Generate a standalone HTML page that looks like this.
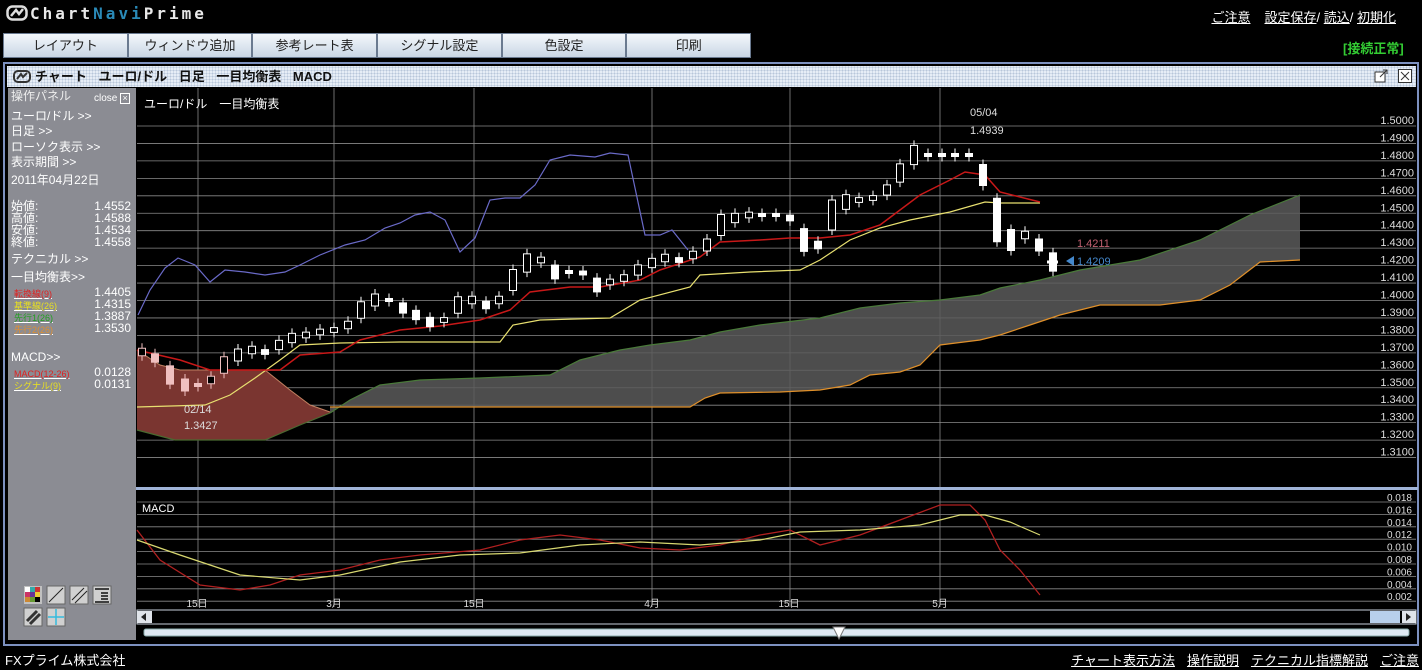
<!DOCTYPE html>
<html><head><meta charset="utf-8">
<style>
*{margin:0;padding:0;box-sizing:border-box}
body{width:1422px;height:670px;background:#000;position:relative;overflow:hidden;font-family:"Liberation Sans","Noto Sans CJK JP",sans-serif;color:#fff}
.abs{position:absolute}
.logo{left:6px;top:4px;font-size:16px;font-weight:bold;letter-spacing:3px;color:#e8e8e8;font-family:"DejaVu Sans Mono","Liberation Mono",monospace}
.toplinks{right:26px;top:7px;font-size:13px}
.toplinks span{text-decoration:underline;margin-left:14px}
.menu{left:3px;top:33px;height:25px;width:748px;display:flex}
.menu div{flex:1;border:1px solid #6a7a90;background:linear-gradient(#f4f8fc,#c9d6e4);color:#222;font-size:13px;text-align:center;line-height:23px}
.ok{left:1343px;top:38px;color:#3c3;font-size:13px;font-weight:bold}
.win{left:3px;top:62px;width:1416px;height:584px;border:2px solid #7d91c0;background:#000}
.title{left:7px;top:66px;width:1409px;height:21px;background:#e6edf6;background-image:radial-gradient(#b8c6da 0.8px,transparent 0.9px);background-size:3px 3px;color:#111;font-size:13px;font-weight:bold;line-height:21px;padding-left:28px;word-spacing:8px}
.panel{left:8px;top:88px;width:128px;height:552px;background:#8b8c93;font-size:12px;line-height:15px}
.panel div{position:absolute;white-space:nowrap}
.r{right:5px}
.foot{top:650px;font-size:13px}
.foot span{text-decoration:underline;margin-left:12px}
</style></head><body>
<div class="abs logo"><svg width="22" height="16" style="vertical-align:-2px;margin-right:2px" viewBox="0 0 22 16"><rect x="1.5" y="1.5" width="19" height="13" rx="5" fill="none" stroke="#ddd" stroke-width="2.5"/><path d="M5 11 L10 5 L13 9 L17 4" stroke="#ddd" stroke-width="2.5" fill="none"/></svg>Chart<span style="color:#2a8ab8">Navi</span>Prime</div>
<div class="abs toplinks"><span>ご注意</span><span>設定保存</span>/ <span style="margin-left:0">読込</span>/ <span style="margin-left:0">初期化</span></div>
<div class="abs menu"><div>レイアウト</div><div>ウィンドウ追加</div><div>参考レート表</div><div>シグナル設定</div><div>色設定</div><div>印刷</div></div>
<div class="abs ok">[接続正常]</div>
<div class="abs win"></div>
<div class="abs title"><svg class="abs" style="left:6px;top:4px" width="18" height="13" viewBox="0 0 18 13"><rect x="1" y="1" width="16" height="11" rx="4" fill="none" stroke="#333" stroke-width="2"/><path d="M4 9 L8 4 L10 7 L14 3" stroke="#333" stroke-width="2" fill="none"/></svg>チャート ユーロ/ドル 日足 一目均衡表 MACD
<svg class="abs" style="left:1366px;top:2px" width="16" height="16"><rect x="2" y="4" width="10" height="10" fill="#fff" stroke="#333"/><path d="M7 9 L14 2 M10 2 H14 V6" stroke="#333" fill="none"/></svg>
<svg class="abs" style="left:1390px;top:2px" width="16" height="16"><rect x="1.5" y="1.5" width="13" height="13" fill="#fff" stroke="#333"/><path d="M4 4 L12 12 M12 4 L4 12" stroke="#333"/></svg></div>
<div class="abs panel">
<div style="left:3px;top:1px;color:#eee">操作パネル</div>
<div style="left:86px;top:3px;font-size:10px">close <span style="border:1px solid #fff;font-size:9px;line-height:9px;display:inline-block;width:10px;text-align:center">×</span></div>
<div style="left:3px;top:21px">ユーロ/ドル &gt;&gt;</div>
<div style="left:3px;top:36px">日足 &gt;&gt;</div>
<div style="left:3px;top:52px">ローソク表示 &gt;&gt;</div>
<div style="left:3px;top:67px">表示期間 &gt;&gt;</div>
<div style="left:3px;top:85px">2011年04月22日</div>
<div style="left:3px;top:112px;line-height:12px">始値:<br>高値:<br>安値:<br>終値:</div>
<div class="r" style="top:112px;line-height:12px;text-align:right">1.4552<br>1.4588<br>1.4534<br>1.4558</div>
<div style="left:3px;top:164px">テクニカル &gt;&gt;</div>
<div style="left:3px;top:182px">一目均衡表&gt;&gt;</div>
<div style="left:6px;top:200px;font-size:9px;line-height:12px;text-decoration:underline"><span style="color:#e02020">転換線(9)</span><br><span style="color:#e8e020">基準線(26)</span><br><span style="color:#20a020">先行1(26)</span><br><span style="color:#e09030">先行2(26)</span></div>
<div class="r" style="top:198px;line-height:12px;text-align:right">1.4405<br>1.4315<br>1.3887<br>1.3530</div>
<div style="left:3px;top:262px">MACD&gt;&gt;</div>
<div style="left:6px;top:280px;font-size:9px;line-height:12px;text-decoration:underline"><span style="color:#e02020">MACD(12-26)</span><br><span style="color:#e8e020">シグナル(9)</span></div>
<div class="r" style="top:278px;line-height:12px;text-align:right">0.0128<br>0.0131</div>
<svg style="position:absolute;left:14px;top:496px" width="100" height="44">
<g><rect x="2" y="2" width="18" height="18" fill="#c0c0c0"/><rect x="3" y="3" width="5" height="5" fill="#fff"/><rect x="8" y="3" width="5" height="5" fill="#3aa"/><rect x="13" y="3" width="5" height="5" fill="#c33"/><rect x="3" y="8" width="5" height="5" fill="#c36"/><rect x="8" y="8" width="5" height="5" fill="#639"/><rect x="13" y="8" width="5" height="5" fill="#ec3"/><rect x="3" y="13" width="5" height="5" fill="#c83"/><rect x="8" y="13" width="5" height="5" fill="#693"/><rect x="13" y="13" width="5" height="5" fill="#000"/></g>
<rect x="25" y="2" width="18" height="18" fill="#d0d0d0" stroke="#666"/><path d="M27 18 L41 4" stroke="#222"/>
<rect x="48" y="2" width="18" height="18" fill="#d0d0d0" stroke="#666"/><path d="M50 16 L62 4 M53 19 L65 7" stroke="#222"/>
<rect x="71" y="2" width="18" height="18" fill="#d0d0d0" stroke="#666"/><path d="M73 5 H87 M79 9 H86 M79 12 H86 M79 15 H86 M73 18 H87" stroke="#111" stroke-width="1.5"/>
<rect x="2" y="24" width="18" height="18" fill="#d0d0d0" stroke="#666"/><path d="M5 37 L15 27 M8 40 L18 30" stroke="#333" stroke-width="3"/>
<rect x="25" y="24" width="18" height="18" fill="#d0d0d0" stroke="#666"/><path d="M34 25 V41 M26 33 H42" stroke="#3bd" stroke-width="1.5"/>
</svg>
</div>
<svg class="abs" style="left:0;top:0" width="1422" height="670" id="ch"></svg>
<div class="abs foot" style="left:5px">FXプライム株式会社</div>
<div class="abs foot" style="right:3px"><span>チャート表示方法</span><span>操作説明</span><span>テクニカル指標解説</span><span>ご注意</span></div>
<script>
var s='';
function pl(p,c,w){return '<polyline fill="none" stroke="'+c+'" stroke-width="'+(w||1)+'" points="'+p+'"/>';}
function pts(a){var o=[];for(var i=0;i<a.length;i+=2)o.push(a[i]+','+a[i+1]);return o.join(' ');}
for(var k=0;k<20;k++){var y=126+k*17.45;s+='<line x1="137" x2="1416" y1="'+y+'" y2="'+y+'" stroke="#8a8a8a" stroke-width="0.8"/>';s+='<text x="1414" y="'+(y-2)+'" fill="#ddd" font-size="11" text-anchor="end">'+(1.5-k*0.01).toFixed(4)+'</text>';}
var vx=[198,334,474,652,790,940];
vx.forEach(function(x){s+='<line x1="'+x+'" x2="'+x+'" y1="88" y2="607" stroke="#8a8a8a" stroke-width="0.8"/>';});
var A=[330,413,350,400,380,385,420,380,480,378,550,375,580,360,620,350,650,345,690,340,720,332,760,325,820,318,860,308,900,303,940,300,980,295,1000,288,1040,280,1080,270,1140,260,1200,240,1250,215,1300,195];
var B=[1300,260,1260,262,1230,285,1200,300,1160,305,1100,305,1060,315,1030,325,1000,335,980,340,940,345,920,365,900,372,870,375,850,385,820,390,780,392,720,393,705,398,690,407,330,407];
s+='<polygon points="'+pts(A.concat(B))+'" fill="#5a5a5a" fill-opacity="0.85"/>';
var RU=[137,350,160,365,180,370,265,370,290,390,310,405,330,412];
var RL=[330,413,300,425,265,440,175,440,137,430];
s+='<polygon points="'+pts(RU.concat(RL))+'" fill="#7a3530"/>';
s+=pl(pts(A),'#4a7a3a',1.2)+pl(pts(B),'#e0902a',1.2)+pl(pts(RU),'#c08060',1)+pl(pts(RL),'#4a6a30',1.2);
s+=pl(pts([137,407,205,405,230,395,255,378,280,360,300,345,340,343,400,342,500,342,513,325,540,320,610,318,640,300,690,287,700,275,750,272,800,270,820,260,850,240,880,228,910,220,950,212,985,202,1000,203,1040,203]),'#e8e070',1.2);
s+=pl(pts([137,350,180,360,210,370,280,370,300,355,340,352,360,340,400,330,440,326,480,320,510,310,530,292,570,287,600,287,640,280,660,270,700,257,720,242,760,240,790,238,820,238,850,235,880,225,900,210,920,195,950,180,965,172,985,175,1000,192,1040,202]),'#c81818',1.5);
s+=pl(pts([138,315,150,290,165,268,178,258,195,265,210,282,225,270,245,272,265,275,285,272,300,265,320,255,345,245,365,240,385,228,400,223,415,215,430,212,445,220,460,252,475,238,490,200,505,198,520,198,535,185,550,160,570,155,595,157,610,153,628,155,645,235,660,235,672,230,688,250]),'#6a6ac8',1.2);
var C=[142,352,155,358,170,375,185,385,198,385,211,380,224,365,238,355,252,350,265,352,279,345,292,338,306,335,320,332,334,330,348,325,361,310,375,300,389,300,403,308,416,315,430,322,444,320,458,305,472,300,486,305,499,300,513,280,527,263,541,260,555,272,569,272,583,273,597,285,610,282,624,278,638,270,652,263,665,258,679,260,693,255,707,245,721,225,735,218,749,215,762,215,776,215,790,218,804,240,818,245,832,215,846,202,859,200,873,198,887,190,900,173,914,155,928,155,942,155,955,155,969,155,983,175,997,220,1011,240,1025,235,1039,245,1053,262];
for(var i=0;i<C.length;i+=2){var x=C[i],y=C[i+1],py=i?C[i-1]:y+5;var up=y<py;var h=Math.max(3,Math.abs(py-y)*0.9+3);var t=y-h/2;var col=x<230?'#f0c0c0':'#fff';
s+='<line x1="'+x+'" x2="'+x+'" y1="'+(t-5)+'" y2="'+(t+h+5)+'" stroke="'+col+'"/>';
s+='<rect x="'+(x-3.5)+'" y="'+t+'" width="7" height="'+h+'" fill="'+(up?'#000':col)+'" stroke="'+col+'"/>';}
s+='<text x="144" y="108" fill="#fff" font-size="12">ユーロ/ドル　一目均衡表</text>';
s+='<text x="970" y="116" fill="#ddd" font-size="11">05/04</text><text x="970" y="134" fill="#ddd" font-size="11">1.4939</text>';
s+='<text x="184" y="413" fill="#ddd" font-size="11">02/14</text><text x="184" y="429" fill="#ddd" font-size="11">1.3427</text>';
s+='<text x="1077" y="247" fill="#c06070" font-size="11">1.4211</text><polygon points="1066,261 1074,256 1074,266" fill="#48c"/><text x="1077" y="265" fill="#48c" font-size="11">1.4209</text>';
s+='<line x1="1047" x2="1058" y1="262" y2="262" stroke="#fff" stroke-width="3"/>';
s+='<rect x="136" y="487" width="1282" height="3" fill="#a0b4d8"/>';
for(var k=0;k<9;k++){var y=502+k*12.4;s+='<line x1="137" x2="1416" y1="'+y+'" y2="'+y+'" stroke="#8a8a8a" stroke-width="0.8"/><text x="1412" y="'+(y-1)+'" fill="#ddd" font-size="10" text-anchor="end">'+(0.018-k*0.002).toFixed(3)+'</text>';}
s+='<text x="142" y="512" fill="#fff" font-size="11">MACD</text>';
s+=pl(pts([137,530,160,560,200,585,240,590,270,585,300,575,340,570,380,560,420,555,480,550,520,540,560,535,600,540,640,548,680,550,720,545,760,535,790,530,820,545,860,535,900,520,940,505,970,505,985,520,1000,550,1020,570,1040,595]),'#b02020',1.3);
s+=pl(pts([137,540,180,555,240,575,300,580,340,575,400,562,460,555,520,553,580,545,640,542,700,545,760,540,800,532,860,530,920,525,960,515,985,515,1010,522,1040,535]),'#d8d870',1.2);
[['15日',197],['3月',334],['15日',474],['4月',652],['15日',789],['5月',940]].forEach(function(a){s+='<text x="'+a[1]+'" y="607" fill="#ddd" font-size="10" text-anchor="middle">'+a[0]+'</text>';});
s+='<rect x="137" y="610" width="1279" height="14" fill="#000" stroke="#c8d0dc"/><rect x="137" y="611" width="15" height="12" fill="#e0e4ea"/><polygon points="141,617 146,613 146,621" fill="#222"/>';
s+='<rect x="1370" y="611" width="30" height="12" fill="#b8d0ec"/><rect x="1402" y="611" width="14" height="12" fill="#e0e4ea"/><polygon points="1411,617 1406,613 1406,621" fill="#222"/>';
s+='<rect x="144" y="629" width="1265" height="7" rx="2" fill="#dfe8f2" stroke="#8aa"/><polygon points="833,627 845,627 839,639" fill="#fff" stroke="#777"/>';
document.getElementById('ch').innerHTML=s;
</script>
</body></html>
